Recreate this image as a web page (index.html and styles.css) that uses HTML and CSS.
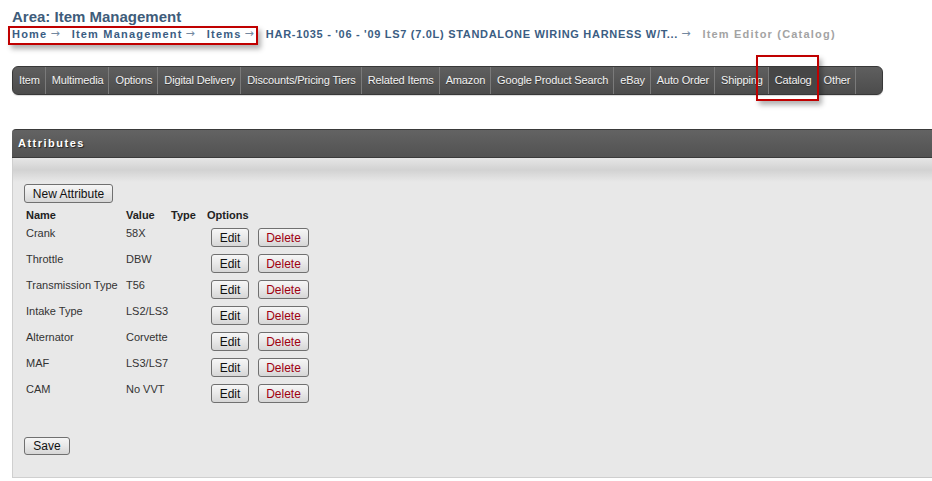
FILE: index.html
```html
<!DOCTYPE html>
<html lang="en">
<head>
  <meta charset="UTF-8" />
  <title>Item Editor (Catalog)</title>
  <link rel="stylesheet" href="styles.css">
</head>
<body>
  <div class="page">
    <h1 class="area">Area: Item Management</h1>
    <div class="crumbs">
      <a href="#">Home</a><span class="arr">→</span>
      <a href="#">Item Management</a><span class="arr">→</span>
      <a href="#">Items</a><span class="arr">→</span>
      <a href="#" class="long">HAR-1035 - '06 - '09 LS7 (7.0L) STANDALONE WIRING HARNESS W/T...</a><span class="arr">→</span>
      <span class="current">Item Editor (Catalog)</span>
    </div>

    <ul class="tabs">
      <li>Item</li>
      <li>Multimedia</li>
      <li>Options</li>
      <li>Digital Delivery</li>
      <li>Discounts/Pricing Tiers</li>
      <li>Related Items</li>
      <li>Amazon</li>
      <li>Google Product Search</li>
      <li>eBay</li>
      <li>Auto Order</li>
      <li>Shipping</li>
      <li class="active">Catalog</li>
      <li>Other</li>
    </ul>

    <div class="panel">
      <div class="panel-head">Attributes</div>
      <div class="panel-body">
        <button class="btn btn-new">New Attribute</button>
        <table class="attrs">
          <tr>
            <th class="c-name">Name</th>
            <th class="c-value">Value</th>
            <th class="c-type">Type</th>
            <th>Options</th>
          </tr>
          <tr>
            <td>Crank</td><td>58X</td><td></td>
            <td class="opts"><button class="btn btn-edit">Edit</button><button class="btn btn-del">Delete</button></td>
          </tr>
          <tr>
            <td>Throttle</td><td>DBW</td><td></td>
            <td class="opts"><button class="btn btn-edit">Edit</button><button class="btn btn-del">Delete</button></td>
          </tr>
          <tr>
            <td>Transmission Type</td><td>T56</td><td></td>
            <td class="opts"><button class="btn btn-edit">Edit</button><button class="btn btn-del">Delete</button></td>
          </tr>
          <tr>
            <td>Intake Type</td><td>LS2/LS3</td><td></td>
            <td class="opts"><button class="btn btn-edit">Edit</button><button class="btn btn-del">Delete</button></td>
          </tr>
          <tr>
            <td>Alternator</td><td>Corvette</td><td></td>
            <td class="opts"><button class="btn btn-edit">Edit</button><button class="btn btn-del">Delete</button></td>
          </tr>
          <tr>
            <td>MAF</td><td>LS3/LS7</td><td></td>
            <td class="opts"><button class="btn btn-edit">Edit</button><button class="btn btn-del">Delete</button></td>
          </tr>
          <tr>
            <td>CAM</td><td>No VVT</td><td></td>
            <td class="opts"><button class="btn btn-edit">Edit</button><button class="btn btn-del">Delete</button></td>
          </tr>
        </table>
        <button class="btn btn-save">Save</button>
      </div>
    </div>

    <!-- screenshot annotations -->
    <div class="mark mark-crumbs"></div>
    <div class="mark mark-tab"></div>
  </div>
</body>
</html>
```

FILE: styles.css
```css
body {
  margin: 0;
  background: #fff;
  font-family: "Liberation Sans", Arial, sans-serif;
  color: #333;
  overflow: hidden;
}

.page {
  position: relative;
  padding: 8px 0 0 12px;
}

.area {
  margin: 0;
  font-size: 15px;
  line-height: 18px;
  color: #3e5c7a;
}

.crumbs {
  height: 16px;
  font-size: 11px;
  line-height: 16px;
  font-weight: bold;
  letter-spacing: 1.2px;
  white-space: nowrap;
}

.crumbs a {
  color: #3b5d83;
  text-decoration: none;
}

.crumbs a.long {
  letter-spacing: 0.7px;
}

.crumbs .arr {
  display: inline-block;
  width: 12px;
  margin: 0 5px 0 3px;
  line-height: 16px;
  vertical-align: top;
  font-family: "DejaVu Sans", sans-serif;
  font-weight: normal;
  letter-spacing: 0;
  color: #7388a0;
}

.crumbs .current {
  color: #a3a3a3;
}

.tabs {
  display: flex;
  width: 869px;
  height: 27px;
  margin: 24px 0 0;
  padding: 0;
  list-style: none;
  background: linear-gradient(#5f5f5f, #4c4c4c);
  border: 1px solid #383838;
  border-radius: 6px;
  box-shadow: 0 1px 1px rgba(0, 0, 0, 0.15);
  overflow: hidden;
}

.tabs li {
  padding: 0 5px 0 6px;
  line-height: 27px;
  font-size: 11px;
  letter-spacing: -0.15px;
  color: #f2f2f2;
  border-right: 1px solid #7a7a7a;
  text-shadow: 0 1px 0 rgba(0, 0, 0, 0.4);
}

.tabs li.active {
  background: #464646;
}

.panel {
  margin: 34px -40px 0 0;
}

.panel-head {
  height: 27px;
  line-height: 27px;
  padding-left: 6px;
  background: linear-gradient(#636363, #525252);
  border-top: 1px solid #3a3a3a;
  border-bottom: 1px solid #3a3a3a;
  border-radius: 4px 0 0 0;
  color: #fff;
  font-size: 11px;
  font-weight: bold;
  letter-spacing: 1.5px;
  text-shadow: 1px 1px 1px rgba(0, 0, 0, 0.6);
}

.panel-body {
  padding: 26px 11px 22px;
  background: linear-gradient(#e6e6e6 0, #d2d2d2 12px, #e8e8e8 24px, #e8e8e8 100%);
  border-left: 1px solid #cfcfcf;
  border-bottom: 1px solid #cfcfcf;
}

.btn {
  height: 19px;
  padding: 0 7px;
  font-family: "Liberation Sans", Arial, sans-serif;
  font-size: 12px;
  color: #111;
  background: linear-gradient(#f6f6f6, #e8e8e8 50%, #d6d6d6);
  border: 1px solid #707070;
  border-radius: 3px;
  cursor: pointer;
}

.btn-new {
  width: 89px;
  display: block;
}

.attrs {
  margin: 5px 0 0 2px;
  border-collapse: collapse;
  font-size: 11px;
  color: #333;
}

.attrs th {
  padding: 0 0 2px;
  text-align: left;
  line-height: 14px;
  color: #222;
}

.attrs .c-name { width: 100px; }
.attrs .c-value { width: 45px; }
.attrs .c-type { width: 36px; }

.attrs td {
  height: 26px;
  padding: 2px 0 0;
  line-height: 14px;
  vertical-align: top;
  box-sizing: border-box;
}

.attrs td.opts {
  padding: 4px 0 0 4px;
  white-space: nowrap;
}

.btn-edit {
  width: 38px;
  padding: 0;
}

.btn-del {
  width: 51px;
  padding: 0;
  margin-left: 9px;
  color: #a00010;
}

.btn-save {
  display: block;
  width: 46px;
  height: 18px;
  padding: 0;
  margin-top: 31px;
}

.mark {
  position: absolute;
  border: 2px solid #c00000;
  box-shadow: 3px 4px 5px rgba(0, 0, 0, 0.3);
}

.mark-crumbs {
  left: 8px;
  top: 26px;
  width: 246px;
  height: 15px;
}

.mark-tab {
  left: 756px;
  top: 55px;
  width: 59px;
  height: 42px;
}
```
